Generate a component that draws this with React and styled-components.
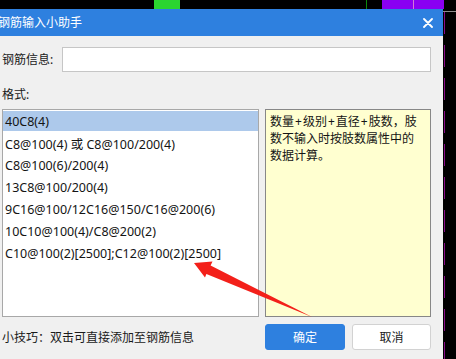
import React from "react";
import styled, { createGlobalStyle } from "styled-components";

const Global = createGlobalStyle`
  html, body { margin: 0; padding: 0; background: #000; }
  body { width: 456px; height: 359px; overflow: hidden; }
  * { box-sizing: border-box; }
`;

const FONT = `"Noto Sans", "Noto Sans CJK SC", sans-serif`;

const Screen = styled.div`
  position: relative;
  width: 456px;
  height: 359px;
  background: #000;
  display: flex;
  flex-direction: column;
  overflow: hidden;
  font-family: ${FONT};
`;

const Strip = styled.div`
  height: 9px;
  display: flex;
  flex-shrink: 0;
`;

const Block = styled.div`
  width: ${(p) => p.$w}px;
  margin-left: ${(p) => p.$ml || 0}px;
  background: ${(p) => p.$c};
  height: 100%;
`;

const PurpleBlock = styled.div`
  width: 62px;
  margin-left: 15px;
  height: 100%;
  background: #8a00f2;
  display: flex;
  padding-left: 31px;
`;

const PinkLine = styled.div`
  width: 1px;
  height: 100%;
  background: #d47ad4;
`;

const Main = styled.div`
  flex: 1;
  display: flex;
  min-height: 0;
`;

const Dialog = styled.div`
  width: 443px;
  display: flex;
  flex-direction: column;
  background: #f0f0f0;
`;

const TitleBar = styled.div`
  height: 27px;
  background: #2e80df;
  display: flex;
  align-items: center;
  justify-content: space-between;
  padding: 0 10px 0 0;
  margin-left: -2px;
  color: #fff;
  font-size: 12px;
  flex-shrink: 0;
`;

const Title = styled.span`
  line-height: 1;
`;

const Body = styled.div`
  padding: 11px 12px 0 2px;
  display: flex;
  flex-direction: column;
`;

const FieldRow = styled.div`
  display: flex;
  align-items: center;
  height: 25px;
`;

const Label = styled.span`
  font-size: 12px;
  color: #1a1a1a;
  line-height: 16px;
  width: ${(p) => (p.$w ? `${p.$w}px` : "auto")};
  flex-shrink: 0;
`;

const Input = styled.div`
  flex: 1;
  height: 25px;
  background: #fff;
  border: 1px solid #c6c6c6;
`;

const FormatLabel = styled(Label)`
  margin-top: 15px;
  margin-bottom: 6px;
`;

const Content = styled.div`
  display: grid;
  grid-template-columns: 257px 166px;
  column-gap: 6px;
  height: 208px;
`;

const List = styled.div`
  background: #fff;
  border: 1px solid #a8a8a8;
  display: flex;
  flex-direction: column;
`;

const Item = styled.div`
  height: 20px;
  margin: 1px 0;
  padding-left: 2px;
  display: flex;
  align-items: center;
  font-size: 12.5px;
  color: #141414;
  background: ${(p) => (p.$selected ? "#adc9eb" : "transparent")};
  white-space: nowrap;
`;

const Hint = styled.div`
  background: #ffffd0;
  border: 1px solid #878787;
  padding: 3px 10px 3px 4px;
  font-size: 12px;
  line-height: 17px;
  color: #141414;
`;

const Plus = styled.span`
  padding: 0 1px;
`;

const Footer = styled.div`
  margin-top: 7px;
  display: flex;
  align-items: center;
`;

const Tip = styled.span`
  flex: 1;
  font-size: 12px;
  color: #1a1a1a;
`;

const Button = styled.button`
  width: ${(p) => p.$w}px;
  height: 26px;
  margin-left: ${(p) => p.$ml || 0}px;
  border-radius: 3px;
  font-family: ${FONT};
  font-size: 12px;
  padding: 0;
  cursor: pointer;
  background: ${(p) => (p.$primary ? "#2e80df" : "#fff")};
  color: ${(p) => (p.$primary ? "#fff" : "#1a1a1a")};
  border: 1px solid ${(p) => (p.$primary ? "#2e80df" : "#d2d2d2")};
`;

const Edge = styled.div`
  flex: 1;
  display: flex;
  flex-direction: column;
`;

const EdgeRule = styled.div`
  height: 1px;
  margin-top: 2px;
  background: #8c8c8c;
  flex-shrink: 0;
`;

const Dashes = styled.div`
  flex: 1;
  width: 1px;
  margin-left: 1px;
  background: repeating-linear-gradient(
    to bottom,
    #8a0a8a 0px,
    #8a0a8a 22px,
    transparent 22px,
    transparent 33px
  );
`;

const Overlay = styled.svg`
  position: absolute;
  left: 0;
  top: 0;
  width: 456px;
  height: 359px;
  pointer-events: none;
`;

const items = [
  "40C8(4)",
  "C8@100(4) 或 C8@100/200(4)",
  "C8@100(6)/200(4)",
  "13C8@100/200(4)",
  "9C16@100/12C16@150/C16@200(6)",
  "10C10@100(4)/C8@200(2)",
  "C10@100(2)[2500];C12@100(2)[2500]",
];

export default function App() {
  return (
    <Screen>
      <Global />
      <Strip>
        <Block $w={26} $ml={154} $c="#2bd52f" />
        <Block $w={1} $ml={186} $c="#0b8a0b" />
        <PurpleBlock>
          <PinkLine />
        </PurpleBlock>
      </Strip>
      <Main>
        <Dialog>
          <TitleBar>
            <Title>钢筋输入小助手</Title>
            <svg width="10" height="10" viewBox="0 0 10 10">
              <path d="M1 1 L9 9 M9 1 L1 9" stroke="#fff" strokeWidth="1.8" strokeLinecap="round" />
            </svg>
          </TitleBar>
          <Body>
            <FieldRow>
              <Label $w={60}>钢筋信息:</Label>
              <Input />
            </FieldRow>
            <FormatLabel>格式:</FormatLabel>
            <Content>
              <List>
                {items.map((t, i) => (
                  <Item key={t} $selected={i === 0}>
                    {t}
                  </Item>
                ))}
              </List>
              <Hint>
                数量<Plus>+</Plus>级别<Plus>+</Plus>直径<Plus>+</Plus>肢数，肢数不输入时按肢数属性中的数据计算。
              </Hint>
            </Content>
            <Footer>
              <Tip>小技巧：双击可直接添加至钢筋信息</Tip>
              <Button $primary $w={80}>确定</Button>
              <Button $w={79} $ml={7}>取消</Button>
            </Footer>
          </Body>
        </Dialog>
        <Edge>
          <EdgeRule />
          <Dashes />
        </Edge>
      </Main>
      <Overlay viewBox="0 0 456 359">
        <polygon
          points="194,263 212.5,261.5 210.6,265.6 312,317 206.4,274 205,277.5"
          fill="#f3201a"
        />
      </Overlay>
    </Screen>
  );
}
